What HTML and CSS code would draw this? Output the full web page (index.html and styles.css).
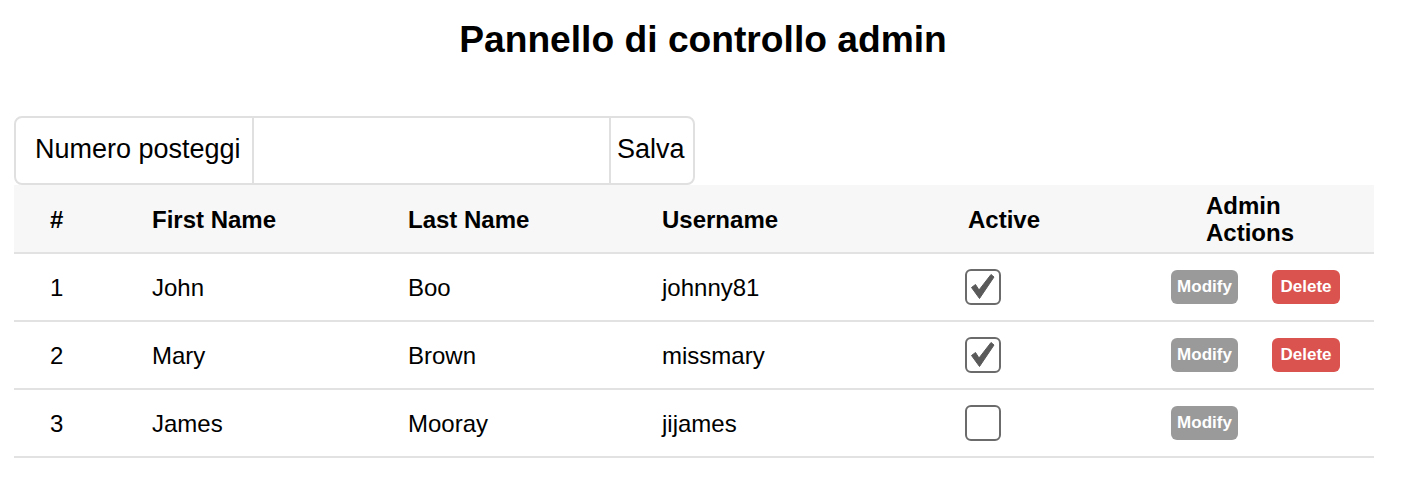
FILE: index.html
```html
<!DOCTYPE html>
<html lang="it">
<head>
<meta charset="utf-8">
<title>Pannello di controllo admin</title>
<link rel="stylesheet" href="styles.css">
</head>
<body>
<h1 class="title">Pannello di controllo admin</h1>
<main class="content">
  <form class="input-group">
    <span class="ig-label">Numero posteggi</span>
    <input class="ig-input" type="text">
    <button class="ig-button" type="button">Salva</button>
  </form>
  <table class="users">
    <thead>
      <tr>
        <th class="c-num">#</th>
        <th class="c-first">First Name</th>
        <th class="c-last">Last Name</th>
        <th class="c-user">Username</th>
        <th class="c-active">Active</th>
        <th class="c-actions">Admin Actions</th>
      </tr>
    </thead>
    <tbody>
      <tr>
        <td>1</td><td>John</td><td>Boo</td><td>johnny81</td>
        <td><span class="check"><svg viewBox="0 0 32 32" width="32" height="32"><path d="M4.5 16.5 L8.5 13.5 L12 19 L24 3.5 L27 6 L12.5 27.5 Z" /></svg></span></td>
        <td class="actions"><button class="btn btn-mod">Modify</button><button class="btn btn-del">Delete</button></td>
      </tr>
      <tr>
        <td>2</td><td>Mary</td><td>Brown</td><td>missmary</td>
        <td><span class="check"><svg viewBox="0 0 32 32" width="32" height="32"><path d="M4.5 16.5 L8.5 13.5 L12 19 L24 3.5 L27 6 L12.5 27.5 Z" /></svg></span></td>
        <td class="actions"><button class="btn btn-mod">Modify</button><button class="btn btn-del">Delete</button></td>
      </tr>
      <tr>
        <td>3</td><td>James</td><td>Mooray</td><td>jijames</td>
        <td><span class="check"></span></td>
        <td class="actions"><button class="btn btn-mod">Modify</button></td>
      </tr>
    </tbody>
  </table>
</main>
</body>
</html>
```
FILE: styles.css
```css
html, body {
  margin: 0;
  padding: 0;
  background: #ffffff;
  color: #000000;
  font-family: "Liberation Sans", Arial, sans-serif;
}

.title {
  margin: 0;
  padding: 18px 20px 0 0;
  height: 42px;
  line-height: 42px;
  font-size: 37.2px;
  font-weight: bold;
  text-align: center;
}

.content {
  padding: 56px 0 0 14px;
}

.input-group {
  display: flex;
  width: 681px;
  height: 69px;
  box-sizing: border-box;
  border: 2px solid #e0e0e0;
  border-radius: 8px;
  margin: 0;
}

.ig-label {
  display: flex;
  align-items: center;
  box-sizing: border-box;
  width: 238px;
  padding-left: 19px;
  padding-bottom: 3px;
  font-size: 27px;
  border-right: 2px solid #e0e0e0;
}

.ig-input {
  box-sizing: border-box;
  width: 357px;
  border: none;
  border-right: 2px solid #e0e0e0;
  outline: none;
  background: transparent;
  font-size: 27px;
}

.ig-button {
  flex: 1;
  border: none;
  background: transparent;
  padding: 0 0 3px 6px;
  text-align: left;
  font-family: "Liberation Sans", Arial, sans-serif;
  font-size: 27px;
  color: #000;
}

.users {
  width: 1360px;
  border-collapse: collapse;
  table-layout: fixed;
  font-size: 24px;
}

.users th,
.users td {
  height: 66px;
  padding: 0 0 0 36px;
  text-align: left;
  vertical-align: middle;
  border-bottom: 2px solid #e2e2e2;
  line-height: 27px;
}

.users thead tr {
  background: #f7f7f7;
}

.users th {
  font-weight: bold;
  padding-top: 1px;
}

.c-num { width: 66px; }
.c-first { width: 220px; }
.c-last { width: 218px; }
.c-user { width: 270px; }
.c-active { width: 202px; }
.users th.c-actions { padding-right: 30px; }

.check {
  display: flex;
  align-items: center;
  justify-content: center;
  box-sizing: border-box;
  width: 36px;
  height: 36px;
  margin-left: -3px;
  border: 2px solid #6b6b6b;
  border-radius: 6px;
}

.check svg path {
  fill: #595959;
  stroke: #595959;
  stroke-width: 1;
  stroke-linejoin: round;
}

.users td.actions {
  padding-left: 1px;
}

.btn {
  height: 34px;
  border: none;
  border-radius: 6px;
  color: #ffffff;
  font-family: "Liberation Sans", Arial, sans-serif;
  font-weight: bold;
  font-size: 17px;
  padding: 0;
  vertical-align: middle;
}

.btn-mod {
  width: 67px;
  background: #9a9a9a;
}

.btn-del {
  width: 68px;
  margin-left: 34px;
  background: #db534f;
}
```
